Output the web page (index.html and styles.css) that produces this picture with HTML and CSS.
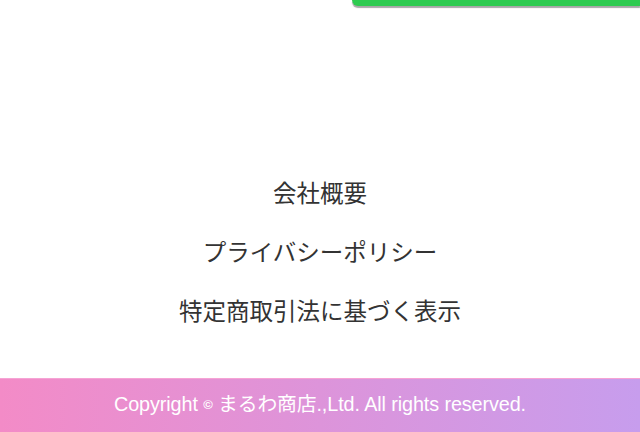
FILE: index.html
```html
<!DOCTYPE html>
<html lang="ja">
<head>
<meta charset="utf-8">
<link rel="stylesheet" href="styles.css">
</head>
<body>
<div class="page">
  <div class="top">
    <div class="green-btn"></div>
  </div>
  <nav class="links">
    <a class="link" href="#">会社概要</a>
    <a class="link" href="#">プライバシーポリシー</a>
    <a class="link" href="#">特定商取引法に基づく表示</a>
  </nav>
  <footer class="footer">
    <p class="copy">Copyright <span class="c">©</span> まるわ商店.,Ltd. All rights reserved.</p>
  </footer>
</div>
</body>
</html>
```
FILE: styles.css
```css
* { box-sizing: border-box; }
html, body { margin: 0; padding: 0; background: #fff; }
.page {
  width: 640px;
  height: 432px;
  display: flex;
  flex-direction: column;
  overflow: hidden;
}
.top {
  height: 12px;
  display: flex;
  justify-content: flex-end;
}
.green-btn {
  width: 288px;
  height: 6px;
  background: #2ecb50;
  border-bottom-left-radius: 10px;
  box-shadow: 0 2px 1px rgba(0,0,0,0.35);
}
.links {
  flex: 1;
  display: flex;
  flex-direction: column;
  align-items: center;
  padding-top: 163px;
  gap: 24px;
}
.link {
  font-family: "Noto Sans CJK JP", sans-serif;
  font-size: 23.5px;
  line-height: 35px;
  color: #333;
  text-decoration: none;
}
.footer {
  height: 54px;
  background: linear-gradient(90deg, #f38bc7 0%, #c79ded 100%);
  display: flex;
  align-items: center;
  justify-content: center;
  border-top: 1px solid #f6a3d4;
  padding-bottom: 2px;
}
.copy {
  margin: 0;
  color: #fff;
  font-family: "Liberation Sans", "Noto Sans CJK JP", sans-serif;
  font-size: 19.8px;
  line-height: 24px;
  letter-spacing: -0.1px;
}
.c { font-size: 13px; font-weight: bold; vertical-align: 2px; }
```
